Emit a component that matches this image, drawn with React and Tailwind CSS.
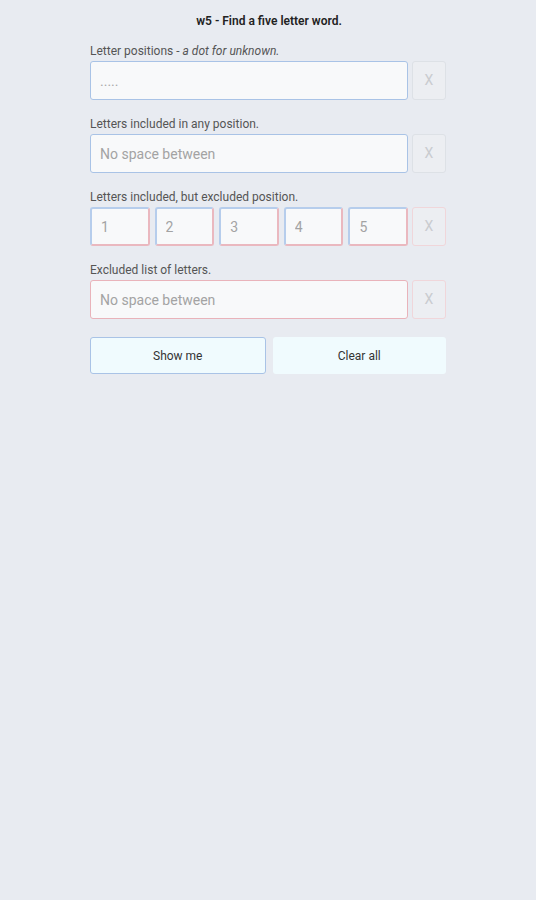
import React from "react";

function XBtn({ red }) {
  return (
    <button
      className={`w-[34px] h-[39px] shrink-0 rounded-[3px] border ${red ? "border-[#f0d6da]" : "border-[#dde1e6]"} bg-[#eceef2] text-[14px] text-[#c9cbcf] flex items-center justify-center`}
    >
      X
    </button>
  );
}

export default function App() {
  return (
    <div className="min-h-[900px] w-full bg-[#e8ebf1] font-['Roboto',sans-serif]">
      <div className="w-[356px] mx-auto pt-[14px]">
        <div className="text-center text-[12px] leading-[14px] font-semibold text-[#222] pl-[2px]">
          w5 - Find a five letter word.
        </div>
        <div className="mt-[16px] text-[12px] leading-[14px] text-[#555]">
          Letter positions - <i>a dot for unknown.</i>
        </div>
        <div className="mt-[3px] flex gap-[4px]">
          <input
            className="flex-1 h-[39px] rounded-[3px] border-[1.5px] border-[#a9c3e6] bg-[#f8f9fa] px-[9px] text-[14px] text-[#333] placeholder:text-[#aaa] outline-none"
            placeholder="....."
          />
          <XBtn />
        </div>

        <div className="mt-[17px] text-[12px] leading-[14px] text-[#555]">
          Letters included in any position.
        </div>
        <div className="mt-[3px] flex gap-[4px]">
          <input
            className="flex-1 h-[39px] rounded-[3px] border-[1.5px] border-[#a9c3e6] bg-[#f8f9fa] px-[9px] text-[14px] text-[#333] placeholder:text-[#a3a3a3] outline-none"
            placeholder="No space between"
          />
          <XBtn />
        </div>

        <div className="mt-[17px] text-[12px] leading-[14px] text-[#555]">
          Letters included, but excluded position.
        </div>
        <div className="mt-[3px] flex gap-[4px]">
          <div className="flex-1 flex gap-[5px]">
            {["1", "2", "3", "4", "5"].map((n) => (
              <input
                key={n}
                className="w-0 flex-1 h-[39px] rounded-[3px] border-2 border-t-[#b6cdec] border-l-[#b6cdec] border-r-[#eab8bf] border-b-[#eab8bf] bg-[#f8f9fa] px-[9px] text-[14px] text-[#333] placeholder:text-[#a3a3a3] outline-none"
                placeholder={n}
              />
            ))}
          </div>
          <XBtn red />
        </div>

        <div className="mt-[17px] text-[12px] leading-[14px] text-[#555]">
          Excluded list of letters.
        </div>
        <div className="mt-[3px] flex gap-[4px]">
          <input
            className="flex-1 h-[39px] rounded-[3px] border-[1.5px] border-[#e9b3ba] bg-[#f8f9fa] px-[9px] text-[14px] text-[#333] placeholder:text-[#a3a3a3] outline-none"
            placeholder="No space between"
          />
          <XBtn red />
        </div>

        <div className="mt-[18px] flex gap-[7px]">
          <button className="flex-1 h-[37px] rounded-[3px] border-[1.5px] border-[#a9c3e6] bg-[#f0fbfe] text-[12px] text-[#333]">
            Show me
          </button>
          <button className="flex-1 h-[37px] rounded-[3px] bg-[#f0fbfe] text-[12px] text-[#333]">
            Clear all
          </button>
        </div>
      </div>
    </div>
  );
}
